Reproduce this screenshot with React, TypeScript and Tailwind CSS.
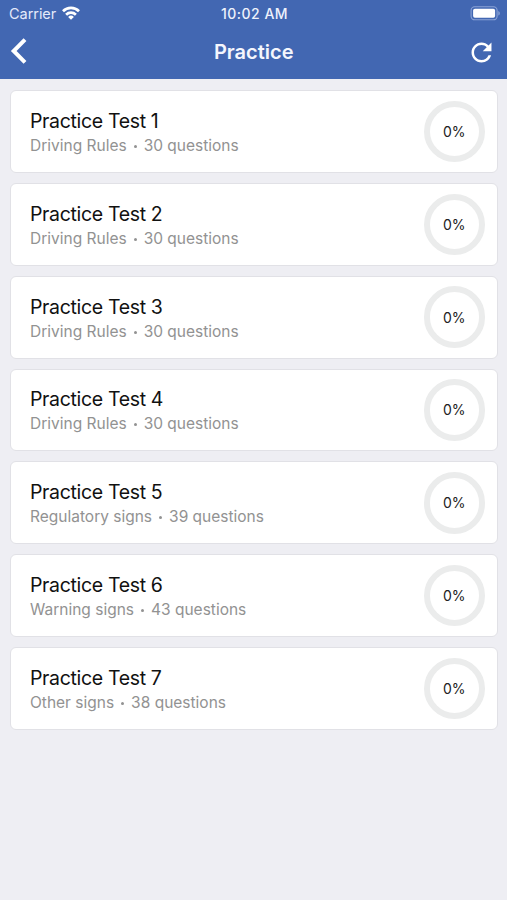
import React from "react";
import { IoMdRefresh } from "react-icons/io";

type Test = {
  id: number;
  category: string;
  questions: number;
  progress: number;
};

const tests: Test[] = [
  { id: 1, category: "Driving Rules", questions: 30, progress: 0 },
  { id: 2, category: "Driving Rules", questions: 30, progress: 0 },
  { id: 3, category: "Driving Rules", questions: 30, progress: 0 },
  { id: 4, category: "Driving Rules", questions: 30, progress: 0 },
  { id: 5, category: "Regulatory signs", questions: 39, progress: 0 },
  { id: 6, category: "Warning signs", questions: 43, progress: 0 },
  { id: 7, category: "Other signs", questions: 38, progress: 0 },
];

const StatusBar: React.FC = () => (
  <div className="grid h-[27px] grid-cols-3 items-center pl-[9px] pr-[7px] text-white">
    <div className="flex items-center gap-[6px]">
      <span className="text-[14.5px] leading-[27px] tracking-[-0.05px] text-[#e4eafa]">
        Carrier
      </span>
      <svg className="mb-px" width="18" height="14" viewBox="0 0 18 14" fill="none" stroke="white" strokeWidth="2.7">
        <path d="M1 5.2a11.4 11.4 0 0 1 16 0" />
        <path d="M4.1 8.7a7 7 0 0 1 9.8 0" />
        <path d="M9 13.7 6.1 10.9a4.100 4.100 0 0 1 5.800 0z" fill="white" stroke="none" />
      </svg>
    </div>
    <span className="whitespace-nowrap text-center text-[14px] font-medium leading-[27px] tracking-[0.5px] text-[#eef2fc]">
      10:02 AM
    </span>
    <svg className="mb-px justify-self-end" width="30" height="15" viewBox="0 0 30 15">
      <rect x="1.1" y="0.8" width="26" height="13" rx="3.6" fill="none" stroke="#8ba3d6" strokeWidth="1.1" />
      <rect x="3.1" y="2.8" width="22" height="9" rx="1.8" fill="white" />
      <path d="M28.3 5v4.6c1-.4 1.5-1.3 1.5-2.3s-.5-1.9-1.5-2.3z" fill="#8ba3d6" />
    </svg>
  </div>
);

const Header: React.FC = () => (
  <header className="flex h-[79px] flex-col bg-[#4267b2]">
    <StatusBar />
    <div className="grid h-[50px] grid-cols-3 items-center pl-[10px] pr-[11.5px] text-white">
      <button aria-label="Back" className="justify-self-start pb-[2px]">
        <svg width="17" height="26" viewBox="0 0 17 26" fill="none" stroke="white" strokeWidth="4">
          <path d="M15 1.700 3.700 13 15 24.300" />
        </svg>
      </button>
      <h1 className="pl-[2px] text-center text-[20px] font-semibold leading-[50px] text-[#f4f6fd]">
        Practice
      </h1>
      <button aria-label="Refresh" className="-mr-px justify-self-end">
        <IoMdRefresh size={29} />
      </button>
    </div>
  </header>
);

const ProgressRing: React.FC<{ value: number }> = ({ value }) => (
  <div className="flex h-[61.5px] w-[61.5px] items-center justify-center rounded-full border-[6px] border-[#ebecec]">
    <span className="text-[14px] text-[#222]">{value}%</span>
  </div>
);

const TestCard: React.FC<{ test: Test }> = ({ test }) => (
  <li className="flex h-[82.8px] items-center justify-between rounded-[6px] border border-[#e1e1e6] bg-white pl-[19px] pr-[12px]">
    <div className="pt-[2px]">
      <h2 className="text-[19.5px] leading-[26px] tracking-[-0.34px] text-[#111]">
        Practice Test {test.id}
      </h2>
      <p className="text-[15.5px] leading-[23px] text-[#929292]">
        {test.category}
        <span className="mx-[7px] inline-block h-[3px] w-[3px] rounded-full bg-[#929292] align-[3px]" />
        {test.questions} questions
      </p>
    </div>
    <ProgressRing value={test.progress} />
  </li>
);

const App: React.FC = () => {
  return (
    <div className="min-h-screen bg-[#eeeef3] font-['Inter','Liberation_Sans',sans-serif]">
      <Header />
      <ul className="flex flex-col gap-[10px] pl-[10px] pr-[9px] pt-[11.2px]">
        {tests.map((test) => (
          <TestCard key={test.id} test={test} />
        ))}
      </ul>
    </div>
  );
};

export default App;
